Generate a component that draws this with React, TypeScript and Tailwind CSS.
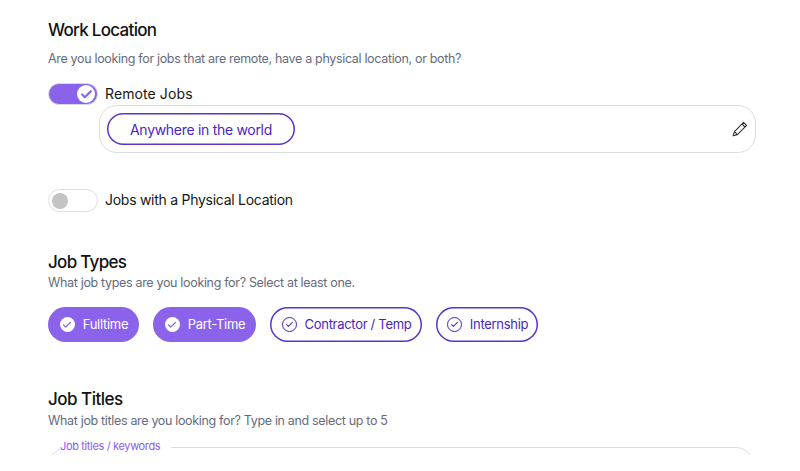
import { Check } from "lucide-react";

const font = { fontFamily: "Inter, 'Noto Sans', sans-serif" };

function CheckDot({ filled }: { filled: boolean }) {
  if (filled) {
    return (
      <span className="flex h-[15px] w-[15px] items-center justify-center rounded-full bg-white">
        <Check className="h-[10px] w-[10px] text-[#8b63ea]" strokeWidth={3} />
      </span>
    );
  }
  return (
    <span className="flex h-[15px] w-[15px] items-center justify-center rounded-full border-[1.25px] border-[#4a1fc4]">
      <Check className="h-[9px] w-[9px] text-[#4a1fc4]" strokeWidth={2.75} />
    </span>
  );
}

function TypePill({ label, on, width }: { label: string; on: boolean; width: string }) {
  return (
    <button
      className={`flex h-[35px] items-center justify-center gap-[8px] rounded-full pl-[1px] text-[13px] tracking-[-0.3px] ${width} ${
        on ? "bg-[#8b63ea] text-white" : "bg-white text-[#4a1fc4] shadow-[inset_0_0_0_1.5px_#5a32cc]"
      }`}
    >
      <CheckDot filled={on} />
      {label}
    </button>
  );
}

export default function App() {
  return (
    <div className="h-[471px] w-[800px] bg-white" style={font}>
      <main className="h-[455px] overflow-hidden pl-12 pr-11">
        <h2 className="pt-[20px] text-[17px] leading-[20px] font-medium tracking-[-0.7px] text-[#111]">
          Work Location
        </h2>
        <p className="mt-[10px] text-[12.5px] leading-[18px] tracking-[-0.33px] text-[#666b7c]">
          Are you looking for jobs that are remote, have a physical location, or both?
        </p>

        <div className="mt-[15px] flex h-[22px] items-center gap-[7px]">
          <span className="flex h-[22px] w-[50px] items-center justify-end rounded-full border border-[#d9d9e3] bg-[#8b63ea] pr-[2px]">
            <span className="flex h-[18px] w-[18px] items-center justify-center rounded-full bg-white">
              <Check className="h-[13px] w-[13px] text-[#8b63ea]" strokeWidth={4} />
            </span>
          </span>
          <span className="-mt-[2px] text-[14px] tracking-[0.1px] text-[#161616]">Remote Jobs</span>
        </div>

        <div className="ml-[51px] flex h-[48px] items-center justify-between rounded-[18px] border border-[#dcdce4] pr-[7px] pl-[7px]">
          <span className="flex h-[32px] w-[188px] items-center justify-center rounded-full text-[14px] tracking-[-0.3px] text-[#4a1fc4] shadow-[inset_0_0_0_1.5px_#5a32cc]">
            Anywhere in the world
          </span>
          <svg
            viewBox="0 0 16 16"
            className="h-[16px] w-[16px]"
            fill="none"
            stroke="#333"
            strokeWidth="1.1"
            strokeLinejoin="round"
          >
            <path d="M1.2 14.8 L2.4 10.6 L11.6 1.4 L14.6 4.4 L5.4 13.6 Z" />
            <path d="M2.4 10.6 L5.4 13.6 M10 3 L13 6" />
          </svg>
        </div>

        <div className="mt-[36px] flex h-[23px] items-center gap-[7px]">
          <span className="flex h-[23px] w-[50px] items-center rounded-full border border-[#dedede] bg-white pl-[3px]">
            <span className="h-[16px] w-[16px] rounded-full bg-[#c4c4c4]" />
          </span>
          <span className="-mt-[2px] text-[14px] tracking-[-0.27px] text-[#161616]">Jobs with a Physical Location</span>
        </div>

        <h2 className="mt-[40px] text-[17px] leading-[20px] font-medium tracking-[-0.7px] text-[#111]">Job Types</h2>
        <p className="mt-[2px] text-[12.5px] leading-[18px] tracking-[-0.33px] text-[#666b7c]">
          What job types are you looking for? Select at least one.
        </p>
        <div className="mt-[15px] flex gap-[14px]">
          <TypePill label="Fulltime" on width="w-[91px]" />
          <TypePill label="Part-Time" on width="w-[103px]" />
          <TypePill label="Contractor / Temp" on={false} width="w-[152px]" />
          <TypePill label="Internship" on={false} width="w-[102px]" />
        </div>

        <h2 className="mt-[47px] text-[17px] leading-[20px] font-medium tracking-[-0.5px] text-[#111]">Job Titles</h2>
        <p className="mt-[3px] text-[12.5px] leading-[18px] tracking-[-0.33px] text-[#666b7c]">
          What job titles are you looking for? Type in and select up to 5
        </p>
        <fieldset className="mt-[9px] mr-[2px] ml-[1px] h-[60px] rounded-[18px] border border-[#dcdce4] px-[10px]">
          <legend className="pr-[11px] pb-[2px] text-[11px] leading-[14px] tracking-[-0.35px] text-[#8b5cf6]">
            Job titles / keywords
          </legend>
        </fieldset>
      </main>
    </div>
  );
}
